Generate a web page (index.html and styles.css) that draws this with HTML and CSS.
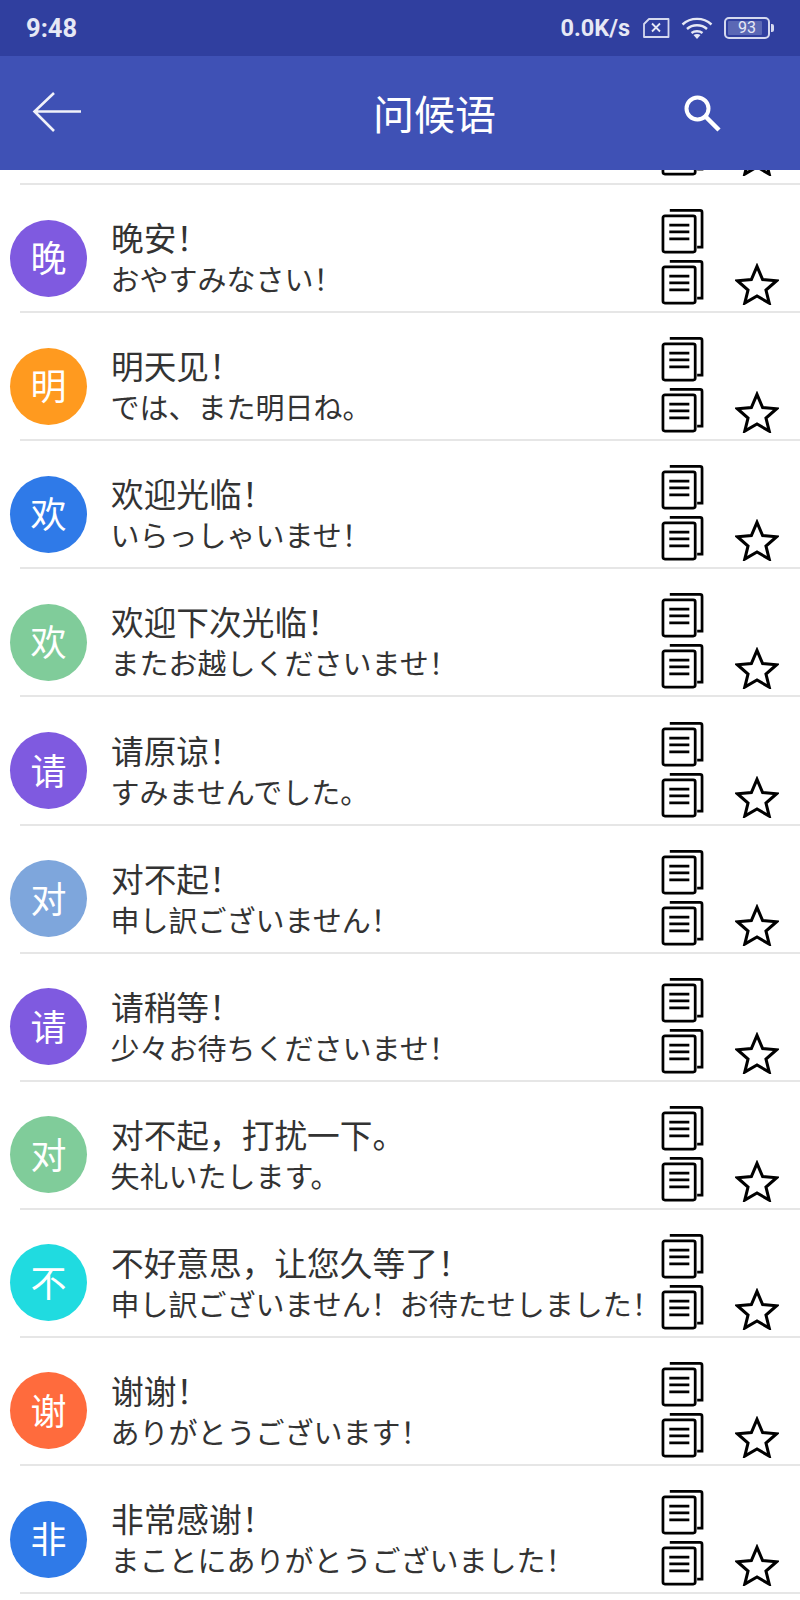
FILE: index.html
```html
<!DOCTYPE html>
<html lang="zh">
<head>
<meta charset="utf-8">
<title>问候语</title>
<link rel="stylesheet" href="styles.css">
</head>
<body>
<svg class="defs" width="0" height="0">
  <defs>
    <symbol id="copy" viewBox="0 0 44 46">
      <path d="M9 2H40a2 2 0 0 1 2 2V39.500H37" fill="none" stroke="#000" stroke-width="2.800"/>
      <rect x="2" y="7.500" width="33" height="37" rx="2" fill="#fff" stroke="#000" stroke-width="2.800"/>
      <path d="M8.500 17H29M8.500 24H29M8.500 31H29" stroke="#000" stroke-width="2.800"/>
    </symbol>
    <symbol id="star" viewBox="0 0 46 44">
      <path d="M23 3.500L28.900 17.400 43.500 18.600 32.400 28.400 35.800 42 23 34.600 10.200 42 13.600 28.400 2.500 18.600 17.100 17.400Z" fill="none" stroke="#000" stroke-width="3.200" stroke-linejoin="miter"/>
    </symbol>
  </defs>
</svg>
<div class="top">
  <div class="status">
    <span class="time">9:48</span>
    <div class="status-right">
      <span class="speed">0.0K/s</span>
      <svg class="sim" width="28" height="22" viewBox="0 0 28 22"><path d="M7 2H26.500V20H2V7Z" fill="none" stroke="#d5d9ef" stroke-width="1.800" stroke-linejoin="round"/><path d="M10 6.500l8 8M18 6.500l-8 8" stroke="#e6e8f5" stroke-width="1.800"/></svg>
      <svg class="wifi" width="32" height="24" viewBox="0 0 32 24"><path d="M1.500 8.500C9.500 1 22.500 1 30.500 8.500M6 13C11.500 8 20.500 8 26 13M10.500 17C13.500 14.700 18.500 14.700 21.500 17" fill="none" stroke="#e6e8f5" stroke-width="2.400"/><path d="M16 23l-3.500-4c2-1.300 5-1.300 7 0Z" fill="#e6e8f5"/></svg>
      <div class="battery"><div class="batt-body"><div class="batt-fill"></div><span class="batt-num">93</span></div><div class="batt-cap"></div></div>
    </div>
  </div>
  <div class="appbar">
    <svg class="back" width="50" height="42" viewBox="0 0 50 42"><path d="M49 20.500H3M22 2L2.500 20.500 22 40" fill="none" stroke="#f1f2f9" stroke-width="2.600"/></svg>
    <h1 class="title">问候语</h1>
    <svg class="search" width="40" height="40" viewBox="0 0 40 40"><circle cx="15.500" cy="15.500" r="11" fill="none" stroke="#fff" stroke-width="4"/><path d="M23.500 23.500L37 37" stroke="#fff" stroke-width="4.500"/></svg>
  </div>
</div>
<main class="list">
  <div class="row stub"><div class="icons"><div class="copies"><svg class="copy"><use href="#copy"/></svg></div><svg class="star"><use href="#star"/></svg></div></div>
  <div class="row"><div class="avatar purple">晚</div><div class="text"><div class="zh">晚安！</div><div class="ja">おやすみなさい！</div></div><div class="icons"><div class="copies"><svg class="copy"><use href="#copy"/></svg><svg class="copy"><use href="#copy"/></svg></div><svg class="star"><use href="#star"/></svg></div></div>
  <div class="row"><div class="avatar orange">明</div><div class="text"><div class="zh">明天见！</div><div class="ja">では、また明日ね。</div></div><div class="icons"><div class="copies"><svg class="copy"><use href="#copy"/></svg><svg class="copy"><use href="#copy"/></svg></div><svg class="star"><use href="#star"/></svg></div></div>
  <div class="row"><div class="avatar blue">欢</div><div class="text"><div class="zh">欢迎光临！</div><div class="ja">いらっしゃいませ！</div></div><div class="icons"><div class="copies"><svg class="copy"><use href="#copy"/></svg><svg class="copy"><use href="#copy"/></svg></div><svg class="star"><use href="#star"/></svg></div></div>
  <div class="row"><div class="avatar green">欢</div><div class="text"><div class="zh">欢迎下次光临！</div><div class="ja">またお越しくださいませ！</div></div><div class="icons"><div class="copies"><svg class="copy"><use href="#copy"/></svg><svg class="copy"><use href="#copy"/></svg></div><svg class="star"><use href="#star"/></svg></div></div>
  <div class="row"><div class="avatar purple">请</div><div class="text"><div class="zh">请原谅！</div><div class="ja">すみませんでした。</div></div><div class="icons"><div class="copies"><svg class="copy"><use href="#copy"/></svg><svg class="copy"><use href="#copy"/></svg></div><svg class="star"><use href="#star"/></svg></div></div>
  <div class="row"><div class="avatar steel">对</div><div class="text"><div class="zh">对不起！</div><div class="ja">申し訳ございません！</div></div><div class="icons"><div class="copies"><svg class="copy"><use href="#copy"/></svg><svg class="copy"><use href="#copy"/></svg></div><svg class="star"><use href="#star"/></svg></div></div>
  <div class="row"><div class="avatar purple">请</div><div class="text"><div class="zh">请稍等！</div><div class="ja">少々お待ちくださいませ！</div></div><div class="icons"><div class="copies"><svg class="copy"><use href="#copy"/></svg><svg class="copy"><use href="#copy"/></svg></div><svg class="star"><use href="#star"/></svg></div></div>
  <div class="row"><div class="avatar green">对</div><div class="text"><div class="zh">对不起，打扰一下。</div><div class="ja">失礼いたします。</div></div><div class="icons"><div class="copies"><svg class="copy"><use href="#copy"/></svg><svg class="copy"><use href="#copy"/></svg></div><svg class="star"><use href="#star"/></svg></div></div>
  <div class="row"><div class="avatar cyan">不</div><div class="text"><div class="zh">不好意思，让您久等了！</div><div class="ja">申し訳ございません！お待たせしました！</div></div><div class="icons"><div class="copies"><svg class="copy"><use href="#copy"/></svg><svg class="copy"><use href="#copy"/></svg></div><svg class="star"><use href="#star"/></svg></div></div>
  <div class="row"><div class="avatar coral">谢</div><div class="text"><div class="zh">谢谢！</div><div class="ja">ありがとうございます！</div></div><div class="icons"><div class="copies"><svg class="copy"><use href="#copy"/></svg><svg class="copy"><use href="#copy"/></svg></div><svg class="star"><use href="#star"/></svg></div></div>
  <div class="row"><div class="avatar blue">非</div><div class="text"><div class="zh">非常感谢！</div><div class="ja">まことにありがとうございました！</div></div><div class="icons"><div class="copies"><svg class="copy"><use href="#copy"/></svg><svg class="copy"><use href="#copy"/></svg></div><svg class="star"><use href="#star"/></svg></div></div>
</main>
</body>
</html>
```

FILE: styles.css
```css
* { box-sizing: border-box; }
html, body { margin: 0; padding: 0; }
body {
  width: 800px;
  height: 1600px;
  overflow: hidden;
  background: #fff;
  font-family: "Noto Sans CJK SC", "Noto Sans", sans-serif;
  display: flex;
  flex-direction: column;
}
.defs { position: absolute; }
.top { flex: none; position: relative; z-index: 2; }
.status {
  height: 56px;
  background: #303f9f;
  color: #e6e8f5;
  display: flex;
  align-items: center;
  justify-content: space-between;
  padding: 0 26px;
  font-family: Roboto, sans-serif;
  font-weight: 700;
}
.time { font-size: 25.500px; }
.status-right { display: flex; align-items: center; }
.speed { font-size: 23.500px; margin-right: 12px; }
.sim { margin-right: 11px; }
.wifi { margin-right: 11px; }
.battery { display: flex; align-items: center; }
.batt-body {
  position: relative;
  width: 46px;
  height: 22px;
  border: 2px solid #d5d9ef;
  border-radius: 5px;
  padding: 2px;
}
.batt-fill { height: 100%; width: 90%; background: #5b68b5; border-radius: 1px; }
.batt-num {
  position: absolute;
  inset: 0;
  text-align: center;
  font-size: 16px;
  line-height: 18px;
  font-weight: 400;
}
.batt-cap { width: 3px; height: 8px; margin-left: 1px; background: #d5d9ef; border-radius: 0 2px 2px 0; }
.appbar {
  height: 114px;
  background: #3f51b5;
  display: flex;
  align-items: center;
  padding-left: 32px;
  position: relative;
}
.back { flex: none; margin-top: -2px; }
.title {
  margin: -2px 0 0 291px;
  font-size: 41px;
  font-weight: 400;
  color: #fff;
  line-height: 1;
}
.search { flex: none; margin-left: 186px; }
.list { flex: 1; overflow: hidden; margin-top: -113px; }
.row {
  height: 128.100px;
  margin-left: 20px;
  padding-top: 20px;
  border-bottom: 2px solid #e6e6e6;
  display: flex;
  align-items: center;
  position: relative;
}
.row.stub { justify-content: flex-end; align-items: flex-end; }
.avatar {
  flex: none;
  width: 77px;
  height: 77px;
  margin-left: -10px;
  padding-bottom: 4px;
  border-radius: 50%;
  color: #fff;
  font-size: 36px;
  display: flex;
  align-items: center;
  justify-content: center;
}
.purple { background: #7f5ae0; }
.orange { background: #ff9a1f; }
.blue { background: #2f7ae8; }
.green { background: #80cc9a; }
.steel { background: #7ea6dc; }
.cyan { background: #20dbe0; }
.coral { background: #ff6b3d; }
.text { flex: 1; min-width: 0; margin-left: 24px; color: #333; white-space: nowrap; }
.zh { font-size: 32.700px; line-height: 40px; }
.ja { font-size: 29px; line-height: 42px; margin-left: -0.500px; }
.icons { flex: none; display: flex; align-items: flex-end; width: 147px; height: 128px; margin-top: -20px; padding: 18px 0 7px 8px; }
.copies { display: flex; flex-direction: column; gap: 5px; width: 74px; }
.copy { display: block; width: 43px; height: 46px; }
.star { display: block; width: 44px; height: 42px; }
```
